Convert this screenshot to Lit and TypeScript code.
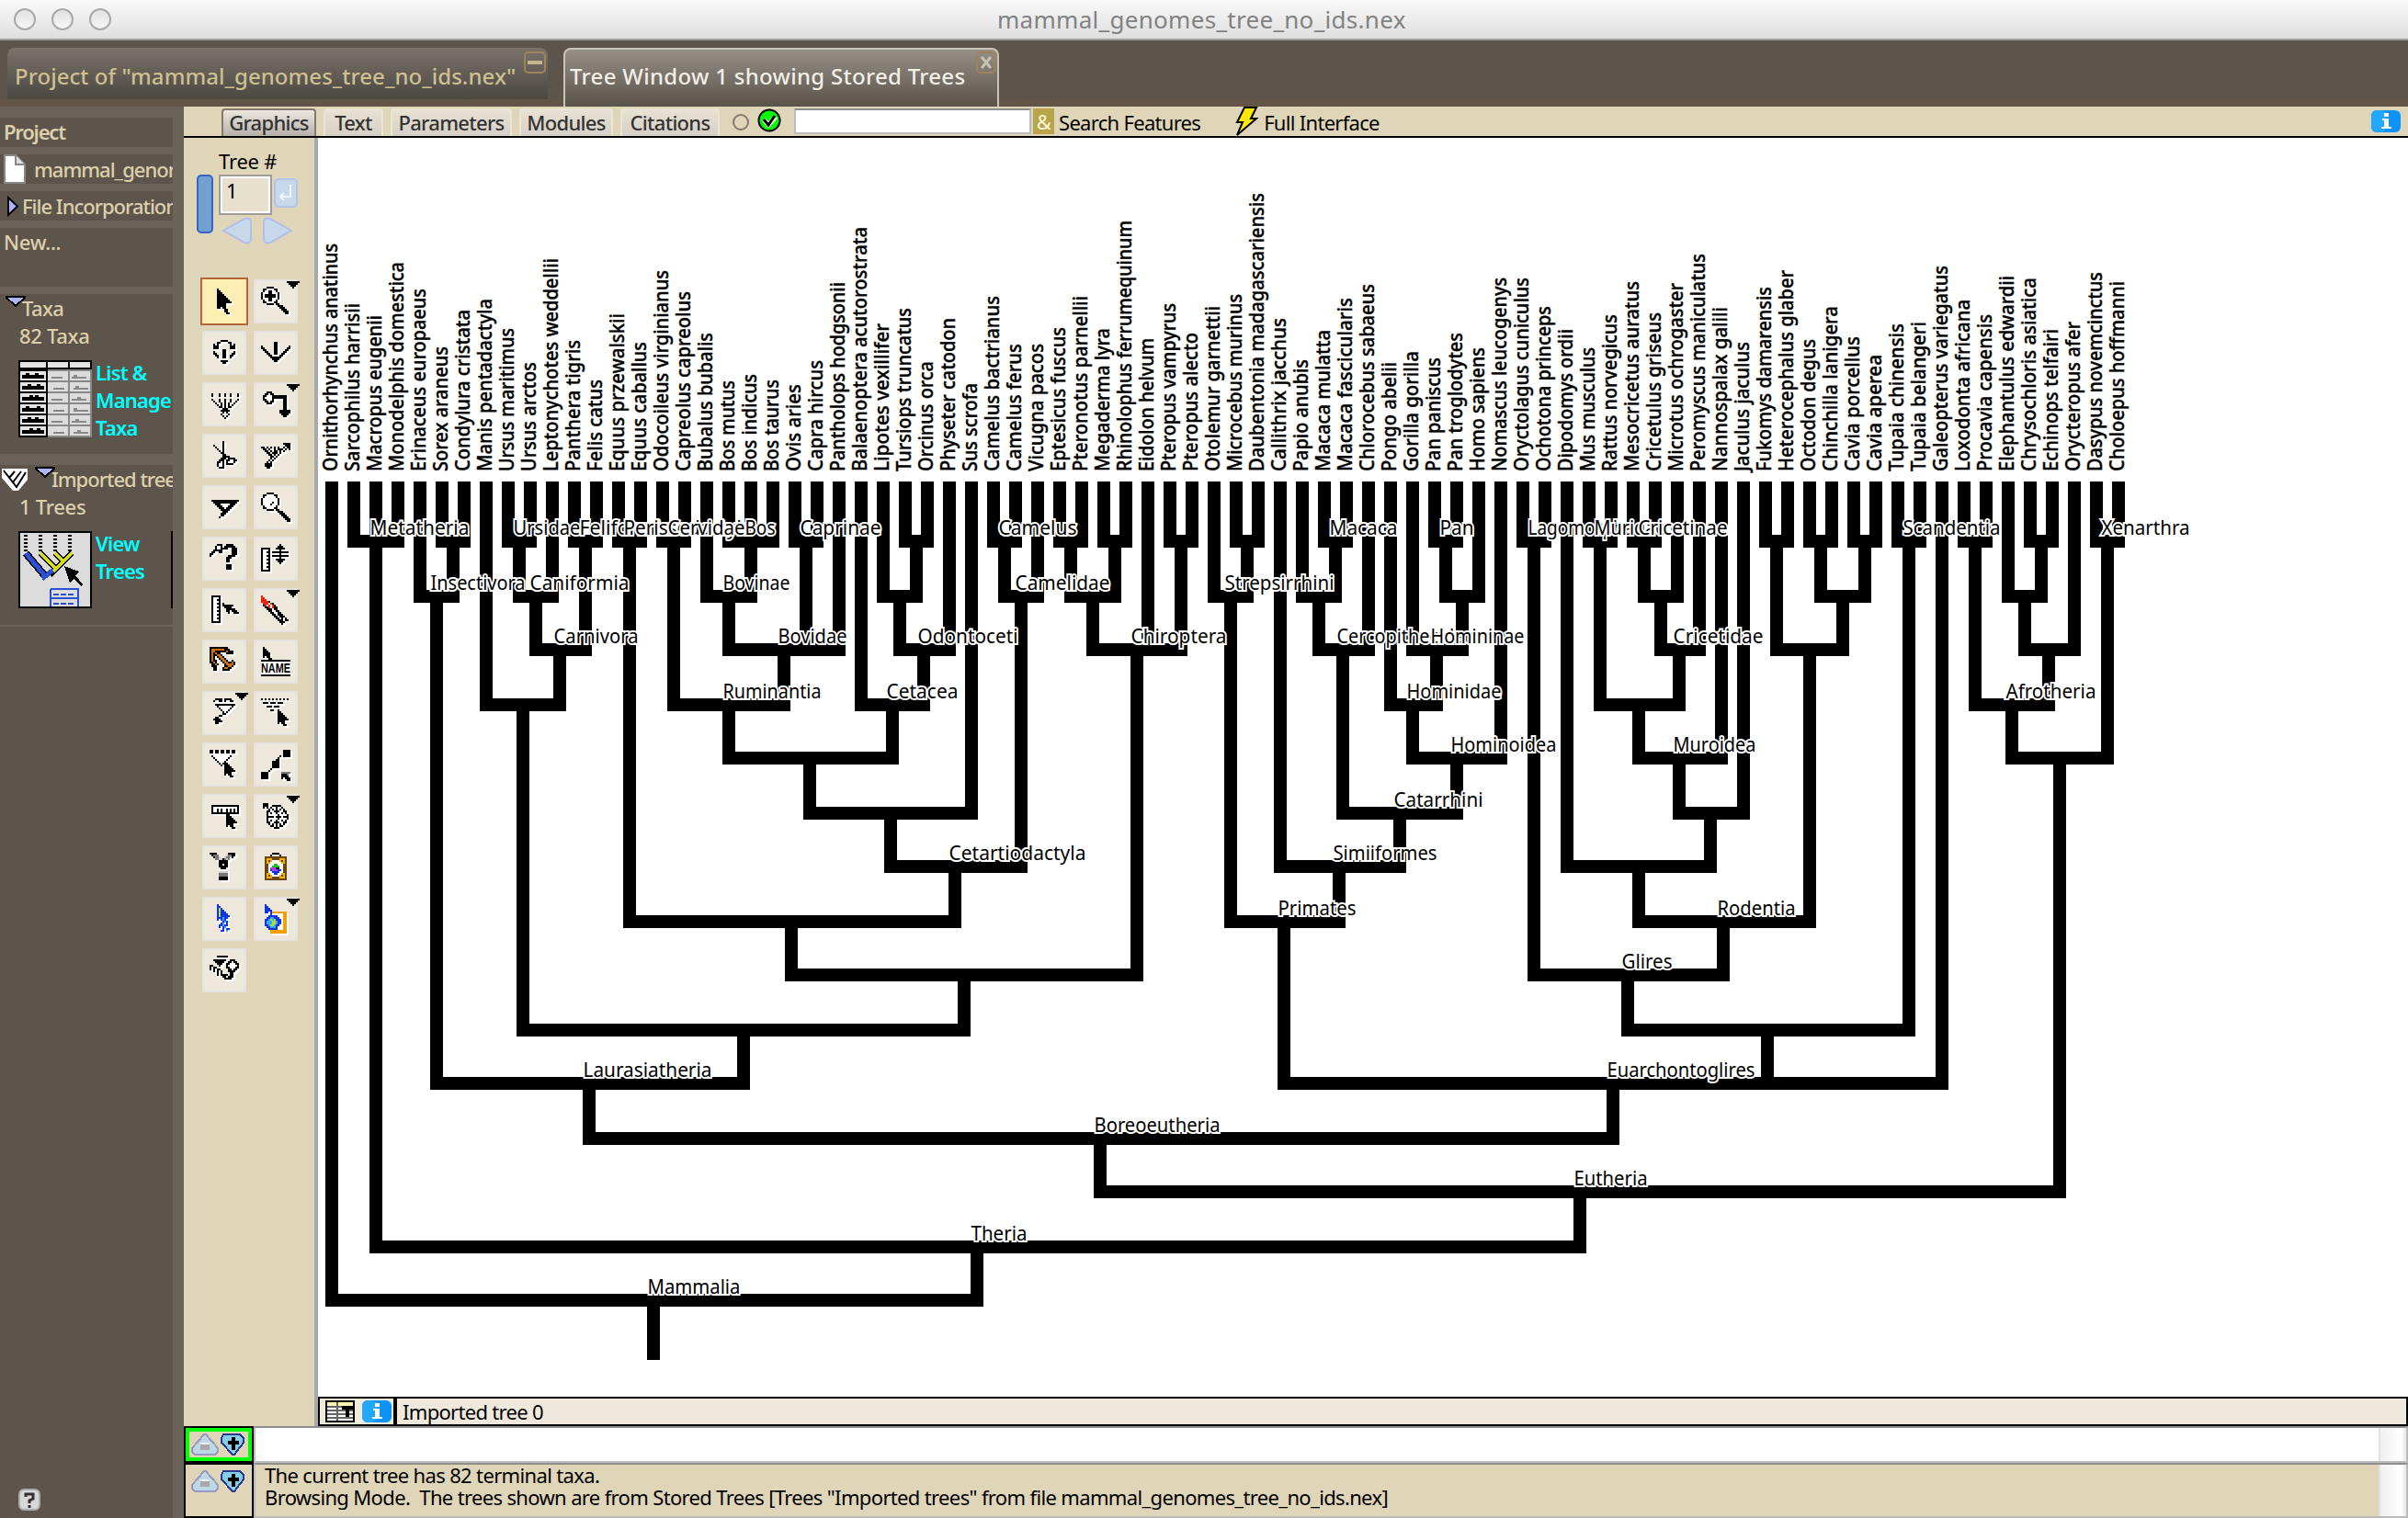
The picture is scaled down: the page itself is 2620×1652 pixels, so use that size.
import { LitElement, html, svg, css, nothing } from "lit";
import { customElement, property } from "lit/decorators.js";

/* ---------- tree data ---------- */

// Species name and the upper end of its label.
const TAXA: [string, number][] = ([
  ["Ornithorhynchus anatinus", 207], ["Sarcophilus harrisii", 367], ["Macropus eugenii", 398],
  ["Monodelphis domestica", 256], ["Erinaceus europaeus", 328], ["Sorex araneus", 481],
  ["Condylura cristata", 383], ["Manis pentadactyla", 354], ["Ursus maritimus", 432],
  ["Ursus arctos", 524], ["Leptonychotes weddellii", 246], ["Panthera tigris", 465],
  ["Felis catus", 569], ["Equus przewalskii", 393], ["Equus caballus", 470],
  ["Odocoileus virginianus", 279], ["Capreolus capreolus", 334], ["Bubalus bubalis", 446],
  ["Bos mutus", 573], ["Bos indicus", 555], ["Bos taurus", 569], ["Ovis aries", 583],
  ["Capra hircus", 519], ["Pantholops hodgsonii", 310], ["Balaenoptera acutorostrata", 164],
  ["Lipotes vexillifer", 420], ["Tursiops truncatus", 378], ["Orcinus orca", 520],
  ["Physeter catodon", 406], ["Sus scrofa", 579], ["Camelus bactrianus", 348],
  ["Camelus ferus", 475], ["Vicugna pacos", 475], ["Eptesicus fuscus", 431],
  ["Pteronotus parnellii", 348], ["Megaderma lyra", 433], ["Rhinolophus ferrumequinum", 147],
  ["Eidolon helvum", 460], ["Pteropus vampyrus", 366], ["Pteropus alecto", 445],
  ["Otolemur garnettii", 373], ["Microcebus murinus", 343], ["Daubentonia madagascariensis", 73],
  ["Callithrix jacchus", 407], ["Papio anubis", 515], ["Macaca mulatta", 438],
  ["Macaca fascicularis", 352], ["Chlorocebus sabaeus", 314], ["Pongo abelii", 524],
  ["Gorilla gorilla", 495], ["Pan paniscus", 510], ["Pan troglodytes", 446],
  ["Homo sapiens", 485], ["Nomascus leucogenys", 299], ["Oryctolagus cuniculus", 299],
  ["Ochotona princeps", 373], ["Dipodomys ordii", 436], ["Mus musculus", 485],
  ["Rattus norvegicus", 397], ["Mesocricetus auratus", 309], ["Cricetulus griseus", 392],
  ["Microtus ochrogaster", 313], ["Peromyscus maniculatus", 235], ["Nannospalax galili", 377],
  ["Jaculus jaculus", 470], ["Fukomys damarensis", 323], ["Heterocephalus glaber", 279],
  ["Octodon degus", 461], ["Chinchilla lanigera", 373], ["Cavia porcellus", 456],
  ["Cavia aperea", 505], ["Tupaia chinensis", 421], ["Tupaia belangeri", 416],
  ["Galeopterus variegatus", 265], ["Loxodonta africana", 358], ["Procavia capensis", 397],
  ["Elephantulus edwardii", 294], ["Chrysochloris asiatica", 299], ["Echinops telfairi", 436],
  ["Orycteropus afer", 416], ["Dasypus novemcinctus", 284], ["Choloepus hoffmanni", 309],
] as [string, number][]).map(([n, top]) => [n, Math.round((815 - top) / 2.45)]);

interface Clade { kids: Node[]; name?: string; len?: number }
type Node = number | Clade;
const c = (kids: Node[], name?: string, len?: number): Clade => ({ kids, name, len });

const carnivora = c([c([c([8, 9], "Ursidae", 73), 10], "Caniformia", 108), c([11, 12], "Feliformia", 100)], "Carnivora", 92);
const ruminantia = c([
  c([15, 16], "Cervidae", 84),
  c([c([17, c([18, 19, 20], "Bos", 33)], "Bovinae", 73), c([21, 22], "Caprinae", 88), 23], "Bovidae", 75),
], "Ruminantia", 107);
const cetacea = c([24, c([c([25, c([26, 27])]), 28], "Odontoceti", 109)], "Cetacea", 78);
const cetartiodactyla = c([
  c([c([ruminantia, cetacea]), 29]),
  c([c([30, 31], "Camelus", 85), 32], "Camelidae", 103),
], "Cetartiodactyla", 149);
const chiroptera = c([c([c([33, 34]), c([35, 36])]), 37, c([38, 39])], "Chiroptera", 104);
const laurasiatheria = c([
  c([4, c([5, 6])], "Insectivora", 103),
  c([c([7, carnivora]), c([c([c([13, 14], "Perissodactyla", 140), cetartiodactyla]), chiroptera])]),
], "Laurasiatheria", 140);
const catarrhini = c([
  c([c([44, c([45, 46], "Macaca", 74)]), 47], "Cercopithecidae", 150),
  c([c([48, c([49, c([c([50, 51], "Pan", 37), 52])], "Homininae", 102)], "Hominidae", 103), 53], "Hominoidea", 115),
], "Catarrhini", 97);
const primates = c([c([40, c([41, 42])], "Strepsirrhini", 119), c([43, catarrhini], "Simiiformes", 113)], "Primates", 85);
const muroidea = c([
  c([c([57, 58], "Muridae", 78), c([c([c([59, 60], "Cricetinae", 97), 61]), 62], "Cricetidae", 98)]), 63,
], "Muroidea", 90);
const rodentia = c([
  c([56, c([muroidea, 64])]),
  c([c([65, 66]), c([c([67, 68]), c([69, 70])])]),
], "Rodentia", 85);
const glires = c([c([54, 55], "Lagomorpha", 115), rodentia], "Glires", 55);
const euarchontoglires = c([primates, c([glires, c([71, 72], "Scandentia", 106)]), 73], "Euarchontoglires", 161);
const afrotheria = c([c([74, 75]), c([c([76, c([77, 78])]), 79])], "Afrotheria", 98);
const ROOT = c([
  0,
  c([
    c([1, 2, 3], "Metatheria", 108),
    c([
      c([laurasiatheria, euarchontoglires], "Boreoeutheria", 137),
      c([afrotheria, c([80, 81], "Xenarthra", 96)]),
    ], "Eutheria", 80),
  ], "Theria", 61),
], "Mammalia", 101);

/* ---------- pixel icons ---------- */

const INK: Record<string, string> = {
  "#": "#000", w: "#fff", r: "#f4200c", o: "#c8700c", g: "#777", b: "#1034e0", l: "#38a8f8",
  y: "#f0b010", n: "#6b4410", p: "#b040f0", e: "#18c018", a: "#aae030", q: "#f5a000", s: "#ccc",
};

const bitmap = (x: number, y: number, rows: string[], shadow = true) => {
  const runs: [number, number, number, string][] = [];
  rows.forEach((row, j) => {
    for (let i = 0; i < row.length; ) {
      let k = i + 1;
      while (k < row.length && row[k] === row[i]) k++;
      if (INK[row[i]]) runs.push([x + i, y + j, k - i, INK[row[i]]]);
      i = k;
    }
  });
  return svg`${shadow ? runs.map(([a, b, w]) => svg`<rect x=${a + 1} y=${b + 1} width=${w} height="1" fill="#fff"></rect>`) : nothing}
    ${runs.map(([a, b, w, f]) => svg`<rect x=${a} y=${b} width=${w} height="1" fill=${f}></rect>`)}`;
};

const CURSOR = ["#.....", "##....", "###...", "####..", "#####.", "######", "####..", "#.##..", "...##."];

const TOOLS = [
  bitmap(8, 5, ["#.......", "##......", "###.....", "####....", "#####...", "######..", "#######.", "########", "#####...", "#####...", "##.##...", "....##..", "....##..", ".....##."]),
  bitmap(4, 4, ["...####........", ".##wwww##......", ".#ww##ww#......", "#www##www#.....", "#w######w#.....", "#w######w#.....", "#www##www#.....", ".#ww##ww#......", ".##wwww##......", "...####.##.....", ".........###...", "..........###..", "...........###.", "............###", ".............##"]),
  bitmap(6, 5, ["....####....", "..##....##..", "#.#......#.#", "###......###", "###......###", ".....##.....", "#....##....#", "##...##...##", ".##..##..##.", "..#..##..#..", "............", "....####....", ".....##....."]),
  bitmap(4, 6, [".......##.......", ".......##.......", "#......##......#", "##.....##.....##", ".##....##....##.", "..##...##...##..", "...##..##..##...", "....##....##....", ".....######.....", "......####......", ".......##......."]),
  bitmap(5, 6, ["#...#..#..#...#", "#...#..#..#...#", "...............", "#...#..#..#...#", ".#..#..#..#..#.", "..#..#.#.#..#..", "...#.#.#.#.#...", "....##.#.##....", "......###......", ".....#####.....", "......#w#......", ".....#www#.....", "......#w#......", ".......#......."]),
  bitmap(5, 5, ["..###..........", ".##w##.........", "##www########..", "#wwww########..", "##www#.....##..", ".##w##.....##..", "..###......##..", "...........##..", "...........##..", "...........##..", ".........######", ".........######", "..........####.", "...........##.."]),
  bitmap(6, 4, [".....#.......", ".....#.......", "#....#.......", ".#...#.......", "..#..#.......", "...#.#.......", "....##.......", ".....##......", ".....####....", "....###.####.", "...###.##ww##", "..##w#.#www#.", "..#ww#.####..", "..#ww#.......", "...###......."]),
  bitmap(4, 5, ["............####", ".............###", "##.#.#.#.#..#.##", ".##.#..#.###.#.#", "..##.#.##.#w#...", "...##.###w#.....", "....##.#w#......", ".....##w#.......", ".....#w#........", "....#w#.........", "...#.#..........", "..####..........", "..####..........", "...##..........."]),
  bitmap(5, 8, ["###############", ".#############.", "..###wwwww###..", "...###www###...", "....###w###....", ".....#####.....", "......###......", ".....###.......", ".....##........", "....#.........."]),
  bitmap(4, 4, ["...####.........", ".##wwww##.......", ".#wwwwww#.......", "#wwwwwwww#......", "#wwwwwwww#......", "#wwwww#ww#......", "#wwww#www#......", ".#wwwwww#.......", ".##wwww##.......", "...####.##......", ".........###....", "..........###...", "...........###..", "............###.", ".............###", "..............##"]),
  bitmap(4, 4, ["....###..####..", "...#ww#.######.", "...#ww####..###", "..#####.....###", ".##..##.....###", "##..........###", "#.........####.", ".........###...", ".........##....", ".........##....", "...............", ".........###...", ".........###...", ".........###..."]),
  bitmap(4, 4, ["..........#....", ".........###...", "#####...#####..", "#www#.....#....", "#ww##.#########", "#www#.....#....", "#ww##.#########", "#www#.....#....", "#ww##...#####..", "#www#....###...", "#ww##.....#....", "#www#..........", "#ww##..........", "#www#..........", "#####.........."]),
  bitmap(5, 4, ["#####..........", "#www#..........", "#ww##..........", "#www#..........", "#ww##.#........", "#www#.######...", "#ww##..####....", "#www#...#####..", "#ww##...##.###.", "#www#....#..###", "#ww##..........", "#www#..........", "#ww##..........", "#www#..........", "#####.........."]),
  bitmap(4, 4, ["r..............", "rr.............", "rrr............", "rrrr#..........", ".rrrwr#........", ".#rwrwr#.......", "..##rwr##......", "...###w##......", "....##ww##.....", ".....##ww##....", "......##w###...", ".......##w###..", "........##w#.#.", ".........###.##", "..........###..", "...........#..."]),
  bitmap(4, 4, ["##########....", "#ooooooo###...", "#oo######o###.", "#o#o##...####.", "#o##oo#.......", "#o#.#oo#......", "#o#..#oo#.....", "#o##..#oo#..#.", "##o#...#oo##o#", ".##o#...#oooo#", ".###....##oo#.", "..##...#oo##..", "..##...####..."]),
  svg`${bitmap(5, 4, ["#....", "##...", "###..", "####.", "####.", "#.##.", "...##"])}
    <rect x="4" y="11" width="16" height="9" fill="#fff"></rect>
    <rect x="4" y="11" width="16" height="1"></rect><rect x="4" y="19" width="16" height="1"></rect>
    <text x="4" y="18.2" font-size="7" font-weight="700" textLength="16" lengthAdjust="spacingAndGlyphs" font-family="Liberation Sans, sans-serif">NAME</text>`,
  bitmap(5, 4, ["..####.####...", ".#..##.#..##..", "..wwwwwwwww...", "..###########.", "...#wwwwwww#..", "....#wwwww#...", ".....#www#....", "......#w#.....", "......##......", "....##........", "..##..........", ".####.........", "..####........", "..##.........."]),
  bitmap(4, 4, ["#.#.#.#.#.#.#.#", "...............", ".###.###.###...", "...............", "...###.###.....", "...............", ".....##..#.....", ".........##....", ".........###...", ".........####..", ".........#####.", ".........######", ".........####..", ".........#.##..", "............##."]),
  svg`${bitmap(4, 4, ["##.##.##.##.##", "##.##.##.##.##", "..............", ".#wwwwwwwww#..", "..#wwwwwww#...", "...#wwwww#....", "....#www#.....", ".....#w#......", "......#......."])}${bitmap(12, 10, CURSOR)}`,
  svg`${bitmap(4, 4, ["............####", "............####", "............####", "..........#.####", ".........#......", "........##......", "......####......", "......####......", "......####......", "......####......", ".....#..........", "....#...........", "####............", "####............", "####............", "####............"])}${bitmap(15, 16, ["ggggg", "###g.", "####.", "#.###", "...##"])}`,
  svg`${bitmap(5, 6, ["###############", "#wwwwwwwwwwwww#", "#ww#w#ww#w#w#w#", "#ww#w#ww#w#w#w#", "###############"])}${bitmap(13, 11, CURSOR.slice(1))}`,
  bitmap(5, 5, ["###...........", "###..#####....", "#.#.#ww#ww#...", "...#w#w#w#w#..", "..##ww###ww##.", "..#w#ww#ww#w#.", "..#wwwww#wwww#", "..####w###w###", "..#wwwww#wwww#", "..#w#ww#ww#w#.", "..##ww###ww##.", "...#w#w#w#w#..", "....##w#w##...", "......###....."]),
  bitmap(4, 4, ["####......####.", ".#ggg....sgg##.", "..#ggs..sggs#..", "...ggss#gsg....", ".....#####.....", ".....#####.....", ".....##w##.....", ".....#####.....", "......###......", ".....wwwww.....", ".....sssss.....", ".....ggggg.....", ".....ggggg.....", ".....#####.....", ".....#####....."]),
  bitmap(6, 4, ["....####....", "...#....#...", "nnnnnnnnnnnn", "nyyynnnnyyyn", "nynywwwwynyn", "nyywwwwwwyyn", "nnwwweewwwnn", "nnwweeeewwnn", "nnwppp##wwnn", "nnwbpppbbwnn", "nnwwbbbbwwnn", "nyywwbbwwyyn", "nynywwwwynyn", "nyyynnnnyyyn", "nnnnnnnnnnnn"], false),
  bitmap(8, 4, ["b.......", "bb......", "bab.....", "babb....", "babbb...", "babbbb..", "babbbbb.", "bbblbb..", "b.blb...", "...blb..", "..bl.b..", ".bblbb..", ".b.bl...", "...b.bb.", "..bb.l.."]),
  bitmap(6, 4, ["b...........", "bb..........", "bbb.........", "bbbb........", "bb.bqqqqqqqq", "...bwwwwwwqq", "..bbbbbwwwqq", ".bbllbbbwwqq", "bblalabbbwqq", "blllaalbbwqq", "blllaalbbwqq", "bblaalbbwwqq", ".bblllbwwwqq", "..bbbbbwwwqq", "...qqqqqqqqq", "...qqqqqqqqq"]),
  bitmap(4, 4, ["....######......", "................", "..#######..###..", "...#####..##w##.", "....###..##www##", "##...#...#wwwww#", "#.##.....##www##", "#.#.##....##w##.", "..#.#.#...####..", "....#.#....##...", "....#.####.##...", ".......##.###...", "........####...."]),
];
const WITH_MENU = new Set([1, 5, 13, 16, 21, 25]);

/* ---------- elements ---------- */

@customElement("tool-button")
export class ToolButton extends LitElement {
  @property({ type: Number }) index = 0;
  static styles = css`
    :host { display: block; position: relative; width: 48px; height: 48px; box-sizing: border-box;
      background: #eee8dc; border: 2px solid #e6e3e0; }
    :host([active]) { background: #fdeeb4; border-color: #fdeeb4; outline: 2px solid #b5653a; }
    svg { position: absolute; left: -2px; top: -2px; width: 52px; height: 48px; overflow: visible; }
  `;
  render() {
    return html`<svg viewBox="0 0 26 24" shape-rendering="crispEdges">
      ${TOOLS[this.index]}
      ${WITH_MENU.has(this.index) ? bitmap(18, 1, ["#######", ".#####.", "..###..", "...#..."], false) : nothing}
    </svg>`;
  }
}

@customElement("tree-canvas")
export class TreeCanvas extends LitElement {
  static styles = css`
    :host { display: block; width: 2274px; height: 1370px; background: #fff; }
    svg { display: block; }
    text { font-family: "Noto Sans", "Open Sans", sans-serif; font-size: 22px; fill: #000; }
    .taxon { font-weight: 500; stroke: #000; stroke-width: 0.4px; }
    .clade { stroke: #fff; stroke-width: 4px; paint-order: stroke; stroke-linejoin: miter; font-size: 21.5px; }
  `;

  private barTop(level: number) {
    return 582 + 58 * (level - 1) + 2 * Math.floor(level / 2);
  }

  render() {
    const stems: unknown[] = [];
    const labels: { x: number; y: number; name: string; len: number }[] = [];
    const place = (n: Node): { x: number; level: number; bottom: number } => {
      if (typeof n === "number") return { x: 177 + 12 * n, level: 0, bottom: 524 };
      const kids = n.kids.map(place);
      const level = Math.max(...kids.map((k) => k.level)) + 1;
      const top = this.barTop(level);
      const first = kids[0].x;
      const last = kids[kids.length - 1].x;
      for (const k of kids) {
        stems.push(svg`<rect x=${k.x * 2} y=${k.bottom} width="14" height=${top - k.bottom + 14}></rect>`);
      }
      stems.push(svg`<rect x=${first * 2} y=${top} width=${(last - first) * 2 + 14} height="14"></rect>`);
      const x = Math.floor((first + last) / 2);
      if (n.name) labels.push({ x: x * 2, y: top, name: n.name, len: n.len! });
      return { x, level, bottom: top };
    };
    const root = place(ROOT);
    stems.push(svg`<rect x=${root.x * 2} y=${root.bottom} width="14" height="72"></rect>`);
    return html`<svg width="2274" height="1370" viewBox="346 150 2274 1370">
      ${TAXA.map(([name, len], i) => svg`<text class="taxon" transform="translate(${367 + 24 * i} 513) rotate(-90)"
        textLength=${len} lengthAdjust="spacingAndGlyphs">${name}</text>`)}
      <g shape-rendering="crispEdges">${stems}</g>
      ${labels.map((l) => svg`<text class="clade" x=${l.x + 0.5} y=${l.y} textLength=${l.len} lengthAdjust="spacingAndGlyphs">${l.name}</text>`)}
    </svg>`;
  }
}

const infoIcon = html`<svg class="info" width="32" height="24" viewBox="0 0 32 24">
  <rect width="32" height="24" rx="6" fill="#0b93fb"></rect><rect width="16" height="24" rx="6" fill="#22a8ff"></rect>
  <path d="M14 3h5v4h-5zM12 9h7v9h3v2H11v-2h3v-7h-2z" fill="#fff"></path></svg>`;

const sizeIcons = html`<svg class="size" width="62" height="24" viewBox="0 0 31 12" shape-rendering="crispEdges">
  <path d="M7 .5 H8 L14.500 8 V10 L13 11.500 H2 L.5 10 V8 Z" fill="#bcd8e2" stroke="#9a9ac0"></path>
  <rect x="5" y="6" width="5" height="3" fill="#a8a8a8"></rect><rect x="5" y="5" width="5" height="1" fill="#e8f0f0"></rect>
  <path d="M17.500 .5 H26.500 L28.500 2.500 V5 L23.500 11.500 H22.500 L16.500 5 V2.500 Z" fill="#86cbe8" stroke="#2a3a90"></path>
  <path d="M22 2h2v2h2v2h-2v3h-2v-3h-2v-2h2z"></path></svg>`;

const discloseDown = html`<svg class="disc" width="22" height="12" viewBox="0 0 11 6" shape-rendering="crispEdges">
  <path d="M0 .5H11L5.5 5.5Z" fill="#b0b4ff" stroke="#000"></path></svg>`;

const tableCells = () => {
  const cells: unknown[] = [];
  for (let r = 0; r < 6; r++) {
    const y = 6 + r * 6;
    cells.push(svg`<rect x="1" y=${y} width="14" height="5" fill="#e4e4e4"></rect><rect x="2" y=${y + 2} width="12" height="2"></rect>
      <rect x=${4 + (r % 3)} y=${y + 1} width="2" height="1"></rect><rect x=${9 + (r % 2)} y=${y + 1} width="2" height="1"></rect>
      <rect x="16" y=${y} width="11" height="5" fill="#dcdcdc"></rect><rect x=${18 + (r % 2)} y=${y + 3} width="6" height="1" fill="#888"></rect>
      <rect x="28" y=${y} width="11" height="5" fill="#dcdcdc"></rect><rect x=${29 + (r % 2)} y=${y + 3} width="8" height="1" fill="#888"></rect>
      <rect x=${30 + (r % 3)} y=${y + 2} width="2" height="1" fill="#888"></rect>`);
  }
  return cells;
};

@customElement("app-root")
export class AppRoot extends LitElement {
  static styles = css`
    :host { display: flex; flex-direction: column; width: 2620px; height: 1652px; overflow: hidden; background: #5d554b;
      font: 22px/30px "Noto Sans", "Open Sans", sans-serif; color: #000; }
    * { box-sizing: border-box; }
    svg { display: block; flex: none; }
    span { white-space: nowrap; }

    .title { display: flex; height: 44px; flex: none; align-items: center; border-bottom: 2px solid #a0a0a0;
      background: linear-gradient(#fafafa, #dedede); padding-left: 15px; gap: 17px; }
    .light { width: 24px; height: 24px; border-radius: 50%; border: 2px solid #a9a9a9; background: linear-gradient(#e2e2e2, #f6f6f6); }
    .caption { margin-left: 947px; color: #828282; font-size: 26px; line-height: 44px; letter-spacing: 0.3px; }

    .windows { display: flex; height: 72px; flex: none; padding: 8px 0 0 8px; gap: 17px;
      background: linear-gradient(#5d554b 0 64px, #625446 64px); }
    .win { display: flex; justify-content: space-between; border-radius: 8px 8px 0 0; font-size: 24px; font-weight: 500; }
    .w1 { width: 588px; height: 56px; padding-left: 8px; background: linear-gradient(#7a736b, #4b4741); color: #cdbf90; }
    .w1 span { line-height: 61px; letter-spacing: 0.05px; }
    .w2 { width: 474px; height: 64px; padding-left: 5px; border: 2px solid #c9c4bb; border-bottom: 0;
      background: linear-gradient(#968f87, #59534a); color: #f1eee6; }
    .w2 span { line-height: 57px; letter-spacing: 0.3px; }
    .box { margin: 4px 2px 0 0; }
    .w2 .box { margin: 2px 1px 0 0; }

    .main { display: flex; flex: 1; min-height: 0; }
    .side { width: 200px; flex: none; background: #6b635a; padding: 12px 12px 0 0; display: flex; flex-direction: column;
      gap: 8px; color: #dccfac; overflow: hidden; font-weight: 500; letter-spacing: -0.3px; }
    .side > div { background: #5d554b; overflow: hidden; flex: none; width: 188px; }
    .row { display: flex; height: 32px; align-items: center; padding-bottom: 1px; white-space: nowrap; letter-spacing: -1px; }
    .new { height: 64px; padding-left: 4px; line-height: 31px; }
    .bold { font-weight: 600; padding: 0 0 2px 4px; letter-spacing: -1.2px; }
    .taxa { height: 174px; }
    .side > .imported { height: 174px; margin-top: 4px; }
    .side > .rest { flex: 1; display: flex; align-items: flex-end; padding: 0 0 8px 20px; margin-top: -6px; }
    .head { display: flex; height: 30px; padding-left: 6px; }
    .head .disc { margin-top: 2px; }
    .head .stored { margin-left: 8px; }
    .head .mark { margin: 4px 0 0 -4px; }
    .head span { margin-left: -4px; line-height: 30px; letter-spacing: -0.6px; }
    .imported .head span { letter-spacing: -1px; }
    .sub { padding-left: 21px; line-height: 30px; height: 30px; }
    .entry { display: flex; padding: 12px 0 0 20px; gap: 4px; color: #0ff; font-weight: 600; letter-spacing: -0.8px; }
    .entry > div { line-height: 30px; margin-top: -2px; }
    .edge { width: 2px; height: 84px; background: #000; margin-left: auto; }

    .work { flex: 1; display: flex; flex-direction: column; min-width: 0; }
    .bar { display: flex; height: 34px; flex: none; background: #dfd5b9; border-bottom: 2px solid #000; padding: 2px 8px 0 41px;
      letter-spacing: -0.7px; }
    .tab { height: 30px; background: linear-gradient(#e8e2d4, #d5cfc6); border: 2px solid #ebe5d6; border-bottom: 0; text-align: center;
      margin-right: 8px; line-height: 27px; color: #333; border-radius: 4px 4px 0 0; font-weight: 500; }
    .tab.on { border-color: #85786c; background: linear-gradient(#ece8e0, #b6b1ab); }
    .find { width: 258px; height: 28px; background: #fff; border: 2px solid #bcbcbc; border-top-color: #8d8d8d; margin-left: 13px; }
    .amp { width: 23px; height: 28px; margin: 0 5px 0 2px; background: #b9a44e; color: #fff9d8; text-align: center; line-height: 28px; }
    .bolt { margin: -2px 1px 0 36px; }
    .lbl { line-height: 30px; }
    .bar .info { margin: 2px 0 0 auto; }

    .mid { display: flex; flex: 1; min-height: 0; }
    .tools { width: 146px; flex: none; background: #dfd5b9; border-right: 4px solid #a9a9a9; padding: 12px 0 0 14px; }
    .num { line-height: 26px; height: 26px; padding-left: 24px; letter-spacing: -0.2px; }
    .grid { display: grid; grid-template-columns: 48px 48px; gap: 8px; margin: 32px 0 0 6px; }
    .doc { flex: 1; display: flex; flex-direction: column; background: #fff; }
    .foot { display: flex; height: 32px; border: 2px solid #000; background: #efe8dc; align-items: center; flex: none; }
    .icons { display: flex; gap: 8px; width: 84px; height: 28px; padding: 2px 0 0 6px; border-right: 4px solid #000; background: #f1ebdc; }
    .foot span { padding-left: 6px; line-height: 28px; letter-spacing: -0.7px; }

    .cmd { display: flex; height: 40px; flex: none; }
    .keys { width: 76px; border: 2px solid #000; background: #dfd5b9; padding: 6px 0 0 6px; flex: none; }
    .cmd .keys { box-shadow: inset 0 0 0 4px #0f0; }
    .field { flex: 1; background: #fff; border: 2px solid #bbb; border-top-color: #8e8e8e; display: flex; justify-content: flex-end; }
    .msg { display: flex; height: 60px; flex: none; }
    .log { flex: 1; background: #dfd5b9; border: 2px solid #bbb; border-top-color: #8e8e8e; display: flex;
      justify-content: space-between; line-height: 24px; letter-spacing: -0.65px; }
    .log p { margin: -1px 0 0 10px; white-space: pre; }
    .scroll { width: 30px; background: linear-gradient(90deg, #f0f0f0, #fff 80%, #e8e8e8); border-left: 2px solid #e2e2e2; }
  `;

  render() {
    return html`
      <div class="title"><i class="light"></i><i class="light"></i><i class="light"></i>
        <span class="caption">mammal_genomes_tree_no_ids.nex</span></div>
      <div class="windows">
        <div class="win w1"><span>Project of "mammal_genomes_tree_no_ids.nex"</span>
          <svg class="box" width="24" height="24"><rect x="1" y="1" width="22" height="22" rx="4" fill="none" stroke="#9c8558" stroke-width="2"></rect><rect x="4" y="10" width="16" height="4" fill="#c5b88f"></rect></svg></div>
        <div class="win w2"><span>Tree Window 1 showing Stored Trees</span>
          <svg class="box" width="22" height="24"><rect x="1" y="1" width="20" height="22" rx="4" fill="none" stroke="#9c8558" stroke-width="2"></rect><path d="M6 6L16 18M16 6L6 18" stroke="#c9c2b0" stroke-width="3"></path></svg></div>
      </div>
      <div class="main">
        <div class="side">
          <div class="row bold">Project</div>
          <div class="row"><svg width="37" height="32"><path d="M5 1H17L27 11V31H5Z" fill="#fff" stroke="#888" stroke-width="2"></path><path d="M17 1V11H27" fill="#ddd" stroke="#888" stroke-width="2"></path></svg>mammal_genomes_tree</div>
          <div class="row"><svg width="24" height="24"><path d="M9 3V22L19 12.5Z" fill="#b0b4ff" stroke="#000" stroke-width="2"></path></svg>File Incorporation</div>
          <div class="new">New...</div>
          <div class="taxa">
            <div class="head">${discloseDown}<span>Taxa</span></div>
            <div class="sub">82 Taxa</div>
            <div class="entry"><svg width="80" height="84" viewBox="0 0 40 42" shape-rendering="crispEdges">
              <rect width="40" height="42" fill="#888"></rect><rect width="16" height="42"></rect><rect width="40" height="5"></rect>
              <rect x="1" y="1" width="14" height="3" fill="#e4e4e4"></rect><rect x="16" y="1" width="11" height="3" fill="#e4e4e4"></rect><rect x="28" y="1" width="11" height="3" fill="#e4e4e4"></rect>
              ${tableCells()}</svg><div>List &amp;<br>Manage<br>Taxa</div></div>
          </div>
          <div class="imported">
            <div class="head"><svg class="mark" width="28" height="26" viewBox="0 0 14 13"><path d="M0 0H14V6L9 12H6L0 5Z" fill="#fff"></path><path d="M1 1L8 10L13 2M4 5L7 1.500M6 7.500L10.500 1.500" fill="none" stroke="#000" stroke-width="1"></path></svg><svg class="disc stored" width="22" height="12" viewBox="0 0 11 6" shape-rendering="crispEdges"><path d="M0 .5H11L5.5 5.5Z" fill="#b0b4ff" stroke="#000"></path></svg><span>Imported trees</span></div>
            <div class="sub">1 Trees</div>
            <div class="entry"><svg width="80" height="84" viewBox="0 0 40 42" shape-rendering="crispEdges">
              <rect x=".5" y=".5" width="39" height="41" fill="#dcdcdc" stroke="#000"></rect>
              <path d="M4 2V11M12 2V11M20 2V11M28 2V11" stroke="#000" stroke-width="2" stroke-dasharray="1 1"></path>
              <path d="M4 12L15 25" stroke="#000" stroke-width="4"></path><path d="M12 12L20 20M20 12L24 16M29 12L17 24" stroke="#000" stroke-width="3.500"></path>
              <path d="M4 12L15 25M13 26L19 21" stroke="#2850d8" stroke-width="2.500"></path><path d="M12 12L20 20M20 12L24 16M29 12L19 22" stroke="#d8dc18" stroke-width="1.700"></path>
              <path d="M25 19L33 22L31 24L35 29L34 30L30 26L28 28Z"></path>
              <path d="M17.500 31.500H32.500V41M17.500 31.500V41M17.500 36.500H32.500" fill="none" stroke="#2850d8"></path>
              <path d="M19 34.500H31M19 39.500H31" stroke="#2850d8" stroke-dasharray="3 1"></path></svg><div>View<br>Trees</div><i class="edge"></i></div>
          </div>
          <div class="rest"><svg width="24" height="24"><rect x="1" y="1" width="22" height="22" rx="5" fill="#d8d8d8" stroke="#aaa" stroke-width="2"></rect><path d="M8 9V6H16V11L12 13V16M12 18V21" fill="none" stroke="#333" stroke-width="3"></path></svg></div>
        </div>
        <div class="work">
          <div class="bar">
            <div class="tab on" style="width:103px">Graphics</div><div class="tab" style="width:65px">Text</div>
            <div class="tab" style="width:132px">Parameters</div><div class="tab" style="width:102px">Modules</div>
            <div class="tab" style="width:108px">Citations</div>
            <svg width="60" height="28"><circle cx="15" cy="15" r="8" fill="none" stroke="#85786c" stroke-width="2"></circle>
              <circle cx="46" cy="13" r="11.500" fill="#0f0" stroke="#000" stroke-width="2"></circle><path d="M40 12L45 18L53 9" fill="none" stroke="#fff" stroke-width="5"></path><path d="M40 12L45 18L52 8" fill="none" stroke="#000" stroke-width="3"></path></svg>
            <div class="find"></div><div class="amp">&amp;</div><span class="lbl">Search Features</span>
            <svg class="bolt" width="32" height="32" viewBox="0 0 32 32"><path d="M12 1H25L19 13H25L4 31L10 17H4Z" fill="#ffe800" stroke="#000" stroke-width="2"></path></svg>
            <span class="lbl">Full Interface</span>${infoIcon}
          </div>
          <div class="mid">
            <div class="tools">
              <div class="num">Tree #</div>
              <svg width="112" height="84" viewBox="214 188 112 84">
                <rect x="215" y="191" width="16" height="62" rx="4" fill="#70a0cf" stroke="#3a62c8" stroke-width="2"></rect>
                <rect x="239" y="191" width="56" height="42" fill="#e6e0cd" stroke="#a09c98" stroke-width="2"></rect><rect x="241" y="193" width="52" height="38" fill="none" stroke="#fff" stroke-width="2"></rect>
                <text x="246" y="216" font-size="22">1</text>
                <rect x="299" y="195" width="24" height="30" rx="4" fill="#c6d8ea" stroke="#b4c4e8" stroke-width="2"></rect>
                <path d="M316 201V214H306M309 210L305 214L309 218" fill="none" stroke="#eef6fa" stroke-width="2"></path>
                <path d="M243 251L266 238Q273 236 273 242V260Q273 266 266 264Z" fill="#c6d8ea" stroke="#b4bce8" stroke-width="2"></path>
                <path d="M317 251L294 238Q287 236 287 242V260Q287 266 294 264Z" fill="#c6d8ea" stroke="#b4bce8" stroke-width="2"></path>
              </svg>
              <div class="grid">${TOOLS.map((_, i) => html`<tool-button .index=${i} ?active=${i === 0}></tool-button>`)}</div>
            </div>
            <div class="doc"><tree-canvas></tree-canvas>
              <div class="foot"><div class="icons"><svg width="32" height="24" viewBox="0 0 16 12" shape-rendering="crispEdges"><rect x=".5" y=".5" width="15" height="11" fill="#fff" stroke="#000"></rect><rect x="1" y="1" width="14" height="2" fill="#fff3b0"></rect><path d="M1 3.500H15M1 5.500H15M1 7.500H15M1 9.500H15M6.500 1V11" stroke="#666"></path><path d="M9 3h6v2h-2v4h-2v-4h-2z"></path></svg>${infoIcon}</div><span>Imported tree 0</span></div>
            </div>
          </div>
          <div class="cmd"><div class="keys">${sizeIcons}</div><div class="field"><i class="scroll"></i></div></div>
          <div class="msg"><div class="keys">${sizeIcons}</div><div class="log"><p>The current tree has 82 terminal taxa.<br>Browsing Mode.  The trees shown are from Stored Trees [Trees "Imported trees" from file mammal_genomes_tree_no_ids.nex]</p><i class="scroll"></i></div></div>
        </div>
      </div>`;
  }
}
